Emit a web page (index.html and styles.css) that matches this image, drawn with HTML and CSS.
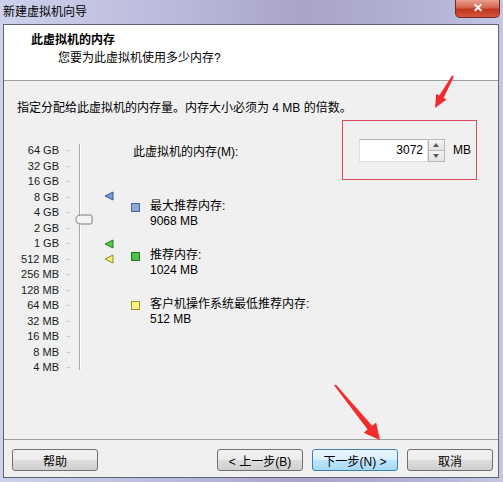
FILE: index.html
```html
<!DOCTYPE html>
<html lang="zh-CN">
<head>
    <meta charset="UTF-8">
    <title>新建虚拟机向导</title>
    <link rel="stylesheet" href="styles.css">
</head>
<body>
    <div class="window">
        <!-- Title bar -->
        <div class="titlebar">
            <span class="title">新建虚拟机向导</span>
            <span class="close-btn">✕</span>
        </div>

        <div class="dialog">
            <!-- Wizard header -->
            <header class="wiz-header">
                <h1>此虚拟机的内存</h1>
                <p>您要为此虚拟机使用多少内存?</p>
            </header>

            <p class="hint">指定分配给此虚拟机的内存量。内存大小必须为 4 MB 的倍数。</p>

            <!-- Memory picker -->
            <main class="mem-area">
                <div class="slider">
                    <div class="scale-labels">
                        <span>64 GB</span><span>32 GB</span><span>16 GB</span><span>8 GB</span>
                        <span>4 GB</span><span>2 GB</span><span>1 GB</span><span>512 MB</span>
                        <span>256 MB</span><span>128 MB</span><span>64 MB</span><span>32 MB</span>
                        <span>16 MB</span><span>8 MB</span><span>4 MB</span>
                    </div>
                    <div class="scale-ticks">
                        <i></i><i></i><i></i><i></i><i></i><i></i><i></i><i></i>
                        <i></i><i></i><i></i><i></i><i></i><i></i><i></i>
                    </div>
                    <div class="track"></div>

                    <svg class="thumb" style="top: 94px" width="18" height="11" viewBox="0 0 18 11">
                        <path d="M1 5.5 Q1 1 6 1 H15.5 Q17 1 17 2.5 V8.5 Q17 10 15.5 10 H6 Q1 10 1 5.5 Z" fill="#f4f4f4" stroke="#7a7a7a"/>
                    </svg>
                    <svg class="marker" style="top: 71px" width="10" height="10" viewBox="0 0 10 10">
                        <path d="M1 5 L9 1 V9 Z" fill="#7d9bd4" stroke="#34558f" stroke-linejoin="round"/>
                    </svg>
                    <svg class="marker" style="top: 119px" width="10" height="10" viewBox="0 0 10 10">
                        <path d="M1 5 L9 1 V9 Z" fill="#5ccc4e" stroke="#1f7a1f" stroke-linejoin="round"/>
                    </svg>
                    <svg class="marker" style="top: 134px" width="10" height="10" viewBox="0 0 10 10">
                        <path d="M1 5 L9 1 V9 Z" fill="#f5ef72" stroke="#8f8a1c" stroke-linejoin="round"/>
                    </svg>
                </div>

                <div class="mem-right">
                    <div class="mem-row">
                        <label for="memsize">此虚拟机的内存(M):</label>
                        <div class="mark-box">
                            <div class="spin-input">
                                <input id="memsize" type="text" value="3072">
                                <div class="spin">
                                    <span class="spin-up"></span>
                                    <span class="spin-down"></span>
                                </div>
                            </div>
                            <span class="unit">MB</span>
                        </div>
                    </div>

                    <ul class="legend">
                        <li>
                            <i class="sq sq-blue"></i>
                            <div>最大推荐内存:<br>9068 MB</div>
                        </li>
                        <li>
                            <i class="sq sq-green"></i>
                            <div>推荐内存:<br>1024 MB</div>
                        </li>
                        <li>
                            <i class="sq sq-yellow"></i>
                            <div>客户机操作系统最低推荐内存:<br>512 MB</div>
                        </li>
                    </ul>
                </div>
            </main>

            <!-- Buttons -->
            <footer class="wiz-footer">
                <button>帮助</button>
                <span class="spacer"></span>
                <button>&lt; 上一步(B)</button>
                <button class="default">下一步(N) &gt;</button>
                <button>取消</button>
            </footer>
        </div>

        <!-- Red annotation arrows -->
        <svg class="arrows" width="503" height="482" viewBox="0 0 503 482">
            <polygon points="453.9,76.5 443.6,97.9 446.6,99.6 435,108 436.2,93.8 439.2,95.5 452.1,75.5" fill="#f22c2c"/>
            <polygon points="335.8,384.4 372.2,425.7 376.1,422.5 380,440 363.7,432.7 367.6,429.5 334.2,385.6" fill="#f22c2c"/>
        </svg>
    </div>
</body>
</html>
```

FILE: styles.css
```css
/* General */
body {
    margin: 0;
    font-family: "Liberation Sans", "Noto Sans CJK SC", sans-serif;
    font-size: 12px;
    color: #000;
}

.window {
    position: relative;
    width: 503px;
    height: 482px;
    box-sizing: border-box;
    padding: 24px 4px 4px 3px;
    background: linear-gradient(90deg, #cdd1ea 0%, #b9b9da 35%, #a9a4ca 60%, #b4b2d6 85%, #c4c6e2 100%);
    display: flex;
    flex-direction: column;
}

/* Title bar */
.titlebar {
    position: absolute;
    top: 0;
    left: 0;
    right: 0;
    height: 24px;
}

.titlebar .title {
    position: absolute;
    left: 3px;
    top: 4px;
    line-height: 16px;
}

.close-btn {
    position: absolute;
    top: 0;
    right: 3px;
    width: 45px;
    height: 18px;
    box-sizing: border-box;
    border: 1px solid #6e2a2a;
    border-top: none;
    border-radius: 0 0 5px 5px;
    background: linear-gradient(#e8a08e 0%, #d4644c 45%, #c1361f 55%, #d2553a 100%);
    color: #fff;
    font-size: 12px;
    font-weight: bold;
    text-align: center;
    line-height: 17px;
}

/* Dialog body */
.dialog {
    flex: 1;
    display: flex;
    flex-direction: column;
    background-color: #f0f0f0;
    border: 1px solid #5e6478;
}

.wiz-header {
    background-color: #fff;
    border-bottom: 1px solid #a0a0a0;
    padding: 7px 0 14px;
}

.wiz-header h1 {
    margin: 0;
    padding-left: 27px;
    font-size: 12px;
    line-height: 16px;
    font-weight: bold;
}

.wiz-header p {
    margin: 2px 0 0;
    padding-left: 54px;
    line-height: 16px;
}

.hint {
    margin: 0;
    padding: 19px 0 4px 13px;
    line-height: 16px;
}

/* Memory area */
.mem-area {
    flex: 1;
    display: flex;
}

.slider {
    position: relative;
    width: 127px;
    display: flex;
    align-items: flex-start;
}

.scale-labels {
    width: 55px;
    padding-top: 23px;
    display: flex;
    flex-direction: column;
    text-align: right;
    font-size: 11px;
    color: #1a1a1a;
}

.scale-labels span {
    height: 15.5px;
    line-height: 15.5px;
}

.scale-ticks {
    margin-left: 8px;
    padding-top: 23px;
    display: flex;
    flex-direction: column;
}

.scale-ticks i {
    height: 15.5px;
    width: 3px;
    background: linear-gradient(transparent 7px, #c4c4c4 7px, #c4c4c4 8px, transparent 8px);
}

.track {
    margin: 24px 0 0 9px;
    width: 1px;
    height: 226px;
    background-color: #a8a8a8;
    border-right: 1px solid #fff;
}

.thumb {
    position: absolute;
    left: 71px;
}

.marker {
    position: absolute;
    left: 100px;
}

.mem-right {
    flex: 1;
    padding-right: 21px;
}

.mem-row {
    display: flex;
    justify-content: space-between;
    align-items: center;
    padding-left: 2px;
}

.mark-box {
    display: flex;
    align-items: center;
    gap: 8px;
    width: 135px;
    height: 60px;
    box-sizing: border-box;
    padding: 0 8px 0 16px;
    border: 1px solid #dc4b55;
}

.spin-input {
    display: flex;
    height: 23px;
}

.spin-input input {
    width: 69px;
    height: 23px;
    box-sizing: border-box;
    border: 1px solid #dbdfe6;
    border-top-color: #abadb3;
    padding: 0 4px 0 0;
    text-align: right;
    font-family: "Liberation Sans", sans-serif;
    font-size: 12px;
    background-color: #fff;
    outline: none;
}

.spin {
    width: 17px;
    display: flex;
    flex-direction: column;
}

.spin span {
    flex: 1;
    position: relative;
    border: 1px solid #b8b8b8;
    background: linear-gradient(#f4f4f4, #e2e2e2);
}

.spin-up {
    border-bottom: none !important;
}

.spin span::after {
    content: "";
    position: absolute;
    left: 4px;
    top: 3px;
    border-left: 3.5px solid transparent;
    border-right: 3.5px solid transparent;
}

.spin-up::after {
    border-bottom: 4px solid #5a5a5a;
}

.spin-down::after {
    border-top: 4px solid #5a5a5a;
}

.unit {
    font-size: 12px;
}

/* Legend */
.legend {
    list-style: none;
    margin: 19px 0 0;
    padding: 0;
    display: flex;
    flex-direction: column;
    gap: 19px;
}

.legend li {
    display: flex;
    gap: 10px;
    line-height: 15px;
}

.sq {
    margin-top: 4px;
    width: 7px;
    height: 7px;
    flex: none;
}

.sq-blue {
    background-color: #8ea9d6;
    border: 1px solid #4a6796;
}

.sq-green {
    background-color: #4cc24a;
    border: 1px solid #207520;
}

.sq-yellow {
    background-color: #fff27c;
    border: 1px solid #9a9430;
}

/* Footer */
.wiz-footer {
    display: flex;
    gap: 9px;
    border-top: 1px solid #a0a0a0;
    padding: 9px 5px 6px 8px;
}

.spacer {
    flex: 1;
}

.wiz-footer button {
    width: 86px;
    height: 22px;
    font-family: "Liberation Sans", "Noto Sans CJK SC", sans-serif;
    font-size: 12px;
    color: #000;
    border: 1px solid #707070;
    border-radius: 3px;
    background: linear-gradient(#f2f2f2 0%, #ebebeb 50%, #dddddd 51%, #cfcfcf 100%);
    padding: 0;
}

.wiz-footer button.default {
    border-color: #3c7fb1;
    background: linear-gradient(#eaf6fd 0%, #d9f0fc 50%, #bee6fd 51%, #a7d9f5 100%);
}

/* Annotation overlay */
.arrows {
    position: absolute;
    top: 0;
    left: 0;
    pointer-events: none;
}
```
